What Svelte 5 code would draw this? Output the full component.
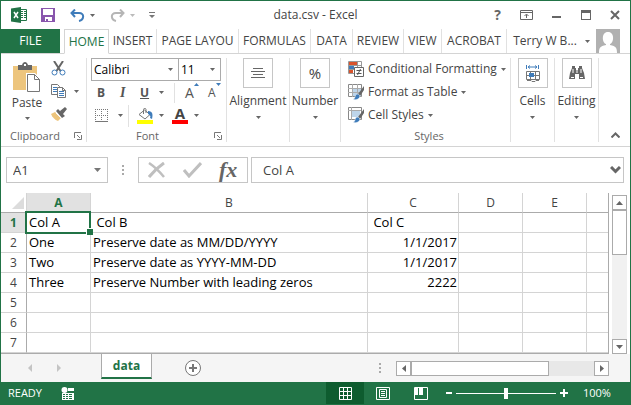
<script>
  const tabs = [
    { name: 'INSERT', w: 48 },
    { name: 'PAGE LAYOU', w: 82 },
    { name: 'FORMULAS', w: 72 },
    { name: 'DATA', w: 42 },
    { name: 'REVIEW', w: 51 },
    { name: 'VIEW', w: 38 },
    { name: 'ACROBAT', w: 65 }
  ];
  const columns = ['A', 'B', 'C', 'D', 'E', ''];
  const rows = [
    ['Col A', ' Col B', ' Col C'],
    ['One', 'Preserve date as MM/DD/YYYY', '1/1/2017'],
    ['Two', 'Preserve date as YYYY-MM-DD', '1/1/2017'],
    ['Three', 'Preserve Number with leading zeros', '2222'],
    [],
    [],
    []
  ];
  let formula = $state('Col A');
  let zoom = $state(50);
</script>

{#snippet caret()}
  <svg class="caret" width="5" height="3" viewBox="0 0 5 3" aria-hidden="true"><path d="M0 0h5L2.500 3z" fill="#666" /></svg>
{/snippet}

{#snippet launcher()}
  <svg width="8" height="8" viewBox="0 0 8 8" fill="none" stroke="#777" aria-hidden="true"><path d="M.5 6V.5H7M3 3l3 3M7.500 3v4.500H3" /></svg>
{/snippet}

<div class="window">
  <header class="title">
    <div class="quick">
      <svg width="17" height="16" viewBox="0 0 17 16" aria-label="Excel">
        <path d="M9 2.500h6.500v11H9" fill="#fff" stroke="#217346" />
        <path d="M10 4.500h2M13 4.500h2M10 6.500h2M13 6.500h2M10 8.500h2M13 8.500h2M10 10.500h2M13 10.500h2" stroke="#217346" />
        <path d="M0 1.500 10 0v16L0 14.500z" fill="#217346" />
        <path d="M3 5l4 6M7 5l-4 6" stroke="#fff" stroke-width="1.500" />
      </svg>
      <button class="bare save" aria-label="Save">
        <svg width="14" height="14" viewBox="0 0 14 14"><path d="M0 0h14v14H0z" fill="#8956ad" /><path d="M2 1h10v6H2zM4 9h7v4H7v-2H5v2H4z" fill="#fff" /></svg>
      </button>
      <button class="bare undo" aria-label="Undo">
        <svg width="15" height="13" viewBox="0 0 15 13" fill="none" stroke="#3f7cba" stroke-width="2"><path d="M5 .5 1.500 4 5 8M2 4h7c6 0 5 7 0 8" /></svg>
        {@render caret()}
      </button>
      <button class="bare redo" aria-label="Redo">
        <svg width="15" height="13" viewBox="0 0 15 13" fill="none" stroke="#b5b5b5" stroke-width="2"><path d="M10 .5 13.500 4 10 8M13 4H6c-6 0-5 7 0 8" /></svg>
        <svg width="5" height="3" viewBox="0 0 5 3"><path d="M0 0h5L2.500 3z" fill="#bbb" /></svg>
      </button>
      <button class="bare" aria-label="Customize toolbar">
        <svg width="6" height="6" viewBox="0 0 6 6"><path d="M0 0h6v1H0zM0 3h6L3 6z" fill="#777" /></svg>
      </button>
    </div>
    <h1>data.csv - Excel</h1>
    <div class="controls">
      <button class="bare help" aria-label="Help">?</button>
      <button class="bare" aria-label="Ribbon display options">
        <svg width="13" height="10" viewBox="0 0 13 10" fill="none" stroke="#666"><path d="M.5.5h12v9H.5zM1 2.500h11M6.500 8V4.500M4.500 6l2-2 2 2" /></svg>
      </button>
      <button class="bare" aria-label="Minimize"><svg width="10" height="10" viewBox="0 0 10 10"><path d="M0 6h9v2H0z" fill="#666" /></svg></button>
      <button class="bare" aria-label="Maximize"><svg width="10" height="10" viewBox="0 0 10 10"><path d="M0 0h10v10H0zM1 3v6h8V3z" fill="#666" fill-rule="evenodd" /></svg></button>
      <button class="bare" aria-label="Close"><svg width="10" height="10" viewBox="0 0 10 10"><path d="M1 1l8 8M9 1L1 9" stroke="#666" stroke-width="2" /></svg></button>
    </div>
  </header>

  <nav class="tabs">
    <button class="file">FILE</button>
    <button class="home">HOME</button>
    {#each tabs as tab}
      <button class="tab" style:width="{tab.w}px">{tab.name}</button>
    {/each}
    <button class="account">Terry W B... {@render caret()}</button>
    <svg class="avatar" width="24" height="24" viewBox="0 0 24 24" aria-label="Account picture">
      <path d="M0 0h24v24H0z" fill="#b1b1b1" />
      <path d="M12 3c7 0 6 11 2 12v1c6 1 7 3 7 8H3c0-5 1-7 7-8v-1C6 14 5 3 12 3z" fill="#fff" />
    </svg>
  </nav>

  <section class="ribbon">
    <div class="group clipboard">
      <div class="body">
        <button class="bare paste">
          <svg width="28" height="31" viewBox="0 0 28 31" aria-hidden="true">
            <path d="M0 4h24v24H0z" fill="#edc57d" />
            <path d="M5 3h4c1-4 5-4 6 0h4v5H5z" fill="#666" /><path d="M11 2h2v2h-2z" fill="#fff" />
            <path d="M13 11h9l6 6v14H13z" fill="#fff" />
            <path d="M14.500 12.500h7l5 5v12h-12zM21.500 12.500v5h5" fill="#fff" stroke="#777" />
          </svg>
          <span>Paste</span>
          {@render caret()}
        </button>
        <div class="clips">
          <button class="bare" aria-label="Cut">
            <svg width="15" height="15" viewBox="0 0 15 15" fill="none"><path d="M3 0l6.500 10M12 0L5.500 10" stroke="#666" stroke-width="2" /><circle cx="3.500" cy="11.500" r="2.500" stroke="#3f7cba" /><circle cx="11.500" cy="11.500" r="2.500" stroke="#3f7cba" /></svg>
          </button>
          <button class="bare" aria-label="Copy">
            <svg width="16" height="14" viewBox="0 0 16 14" fill="#fff" stroke="#777"><path d="M.5.5h6l2 2v8h-8z" /><path d="M2 3.500h4M2 5.500h4M2 7.500h4" stroke="#3f7cba" /><path d="M6.500 3.500h5l3 3v7h-8zM11.500 3.500v3h3" /><path d="M8 7.500h5M8 9.500h5M8 11.500h5" stroke="#3f7cba" /></svg>
            {@render caret()}
          </button>
          <button class="bare" aria-label="Format painter">
            <svg width="16" height="14" viewBox="0 0 16 14"><path d="M0 7l4-2 6 6-3 3C4 13 1 10 0 7z" fill="#edc57d" /><path d="M5 4l2-2 7 7-3 2zM9 4l5-4 2 2-4 5z" fill="#666" /><path d="M5 6l5 5" stroke="#fff" /></svg>
          </button>
        </div>
      </div>
      <footer><span>Clipboard</span>{@render launcher()}</footer>
    </div>

    <div class="group font">
      <div class="body">
        <div class="pickers">
          <label class="pick family"><select aria-label="Font"><option>Calibri</option><option>Arial</option></select>{@render caret()}</label>
          <label class="pick size"><select aria-label="Font size"><option>11</option><option>12</option></select>{@render caret()}</label>
        </div>
        <div class="styles-row">
          <button class="bare b">B</button>
          <button class="bare i">I</button>
          <button class="bare u"><span>U</span>{@render caret()}</button>
          <button class="bare grow" aria-label="Increase font size">A<svg width="5" height="3" viewBox="0 0 5 3"><path d="M0 3h5L2.500 0z" fill="#3f7cba" /></svg></button>
          <button class="bare shrink" aria-label="Decrease font size">A<svg width="5" height="3" viewBox="0 0 5 3"><path d="M0 0h5L2.500 3z" fill="#3f7cba" /></svg></button>
        </div>
        <div class="fills-row">
          <button class="bare borders" aria-label="Borders">
            <svg width="13" height="13" viewBox="0 0 13 13" fill="none" stroke="#777"><path d="M0 .5h13M0 6.500h13M.5 0v12M6.500 0v12M12.500 0v12" stroke-dasharray="1 1" /><path d="M0 12.500h13" /></svg>
            {@render caret()}
          </button>
          <button class="bare fill" aria-label="Fill color">
            <svg width="16" height="16" viewBox="0 0 16 16"><path d="M0 12h16v4H0z" fill="#ff0" /><path d="M2 6.500L7.500 2 13 6.500 8 11zM6.500 6V1.500C6.500 0 9 0 9 1.500V5" fill="#fff" stroke="#777" /><path d="M11 3c5 0 5 4 4 8l-2-1c1-2 0-3-2-4z" fill="#3f7cba" /></svg>
            {@render caret()}
          </button>
          <button class="bare color" aria-label="Font color"><span>A</span>{@render caret()}</button>
        </div>
      </div>
      <footer><span>Font</span>{@render launcher()}</footer>
    </div>

    <div class="group alignment">
      <button class="bare large">
        <span class="frame"><svg width="14" height="11" viewBox="0 0 14 11" stroke="#666"><path d="M2 .5h10M0 3.500h14M2 6.500h10M0 9.500h14" /></svg></span>
        <span>Alignment</span>{@render caret()}
      </button>
    </div>
    <div class="group number">
      <button class="bare large"><span class="frame percent">%</span><span>Number</span>{@render caret()}</button>
    </div>

    <div class="group styles">
      <div class="body">
        <button class="bare">
          <svg width="16" height="16" viewBox="0 0 16 16"><path d="M.5.5h13v12H.5zM0 4.500h13M0 8.500h13M4.500 0v13M9.500 0v13" fill="#fff" stroke="#999" /><path d="M1 1h8v3H1zM1 9h4v3H1z" fill="#d9532c" /><path d="M1 5h5v3H1z" fill="#3f7cba" /><path d="M6.500 6.500h9v9h-9z" fill="#fff" stroke="#666" /><path d="M8.500 9.500h5M8.500 12.500h5M12.500 8l-3 6" stroke="#555" /></svg>
          <span>Conditional Formatting</span>{@render caret()}
        </button>
        <button class="bare">
          <svg width="16" height="16" viewBox="0 0 16 16"><path d="M.5.5h13v12H.5z" fill="#fff" stroke="#888" /><path d="M5 4h8v8H5z" fill="#bed5ea" /><path d="M0 4.500h13M0 8.500h13M4.500 0v13M9.500 0v13" fill="none" stroke="#aaa" /><path d="M16 2l-6 8 2 2 4-6z" fill="#666" /><path d="M9 10c3 0 4 3 1 5-2 1-4 1-5 0 3 0 1-4 4-5z" fill="#3f7cba" stroke="#fff" stroke-width=".5" /></svg>
          <span>Format as Table</span>{@render caret()}
        </button>
        <button class="bare">
          <svg width="16" height="16" viewBox="0 0 16 16"><path d="M.5.5h13v12H.5z" fill="#fff" stroke="#888" /><path d="M0 3.500h13M3.500 0v13" stroke="#aaa" /><path d="M4 4h8v6H4z" fill="#bed5ea" /><path d="M16 2l-6 8 2 2 4-6z" fill="#666" /><path d="M9 10c3 0 4 3 1 5-2 1-4 1-5 0 3 0 1-4 4-5z" fill="#3f7cba" stroke="#fff" stroke-width=".5" /></svg>
          <span>Cell Styles</span>{@render caret()}
        </button>
      </div>
      <footer><span>Styles</span></footer>
    </div>

    <div class="group cells">
      <button class="bare large">
        <span class="frame"><svg width="16" height="17" viewBox="0 0 16 17" fill="none"><path d="M1.500 0v4M13.500 0v4M3 2h9M5 .5L3 2l2 1.500M10 .5L12 2l-2 1.500" stroke="#3f7cba" /><path d="M1.500 6.500h13v8h-13zM1 10.500h14M5.500 6v9M10.500 6v9M2 15.500h4l1 1h3l1-1h3" stroke="#777" /><path d="M4 8h5v4H4z" fill="#3f7cba" /></svg></span>
        <span>Cells</span>{@render caret()}
      </button>
    </div>
    <div class="group editing">
      <button class="bare large">
        <span class="frame"><svg width="16" height="14" viewBox="0 0 16 14"><path d="M3 0h3v2h1v2h2V2h1V0h3v2l2 5 1 6h-6V8H6v5H0l1-6 2-5z" fill="#666" /><path d="M4 3v4M12 3v4M2 11.500h3M11 11.500h3M8 4v3" stroke="#fff" /></svg></span>
        <span>Editing</span>{@render caret()}
      </button>
    </div>
    <button class="bare collapse" aria-label="Collapse ribbon"><svg width="9" height="6" viewBox="0 0 9 6" fill="none" stroke="#666" stroke-width="2"><path d="M.5 5.500l4-4 4 4" /></svg></button>
  </section>

  <section class="formula">
    <label class="namebox"><select aria-label="Name box"><option>A1</option></select><svg width="7" height="4" viewBox="0 0 7 4"><path d="M0 0h7L3.500 4z" fill="#777" /></svg></label>
    <svg class="grip" width="2" height="10" viewBox="0 0 2 10"><path d="M0 0h2v2H0zM0 4h2v2H0zM0 8h2v2H0z" fill="#aaa" /></svg>
    <div class="actions">
      <button class="bare" aria-label="Cancel"><svg width="18" height="16" viewBox="0 0 18 16" stroke="#bfbfbf" fill="none"><path d="M1 1c6 4 10 8 15 14" stroke-width="2.500" /><path d="M16 1C10 5 5 10 1 15" stroke-width="3" /></svg></button>
      <button class="bare" aria-label="Enter"><svg width="19" height="16" viewBox="0 0 19 16"><path d="M1 8l5 6L18 1" fill="none" stroke="#bfbfbf" stroke-width="3" /></svg></button>
      <button class="bare fx" aria-label="Insert function">fx</button>
    </div>
    <div class="entry">
      <input aria-label="Formula" bind:value={formula} />
      <button class="bare" aria-label="Expand formula bar"><svg width="11" height="8" viewBox="0 0 11 8" fill="none" stroke="#666" stroke-width="3"><path d="M1 1l4.500 4.500L10 1" /></svg></button>
    </div>
  </section>

  <main>
    <div class="sheet">
      <table>
        <colgroup><col class="cn" /><col class="ca" /><col class="cb" /><col class="cc" /><col class="cd" /><col class="cd" /><col /></colgroup>
        <thead>
          <tr>
            <th class="corner"><svg width="12" height="12" viewBox="0 0 12 12"><path d="M12 0v12H0z" fill="#dcdcdc" /></svg></th>
            {#each columns as c}<th class:on={c === 'A'}>{c}</th>{/each}
          </tr>
        </thead>
        <tbody>
          {#each rows as row, r}
            <tr>
              <th class:on={r === 0}>{r + 1}</th>
              {#each columns as _, c}
                <td class:active={r === 0 && c === 0} class:num={r > 0 && c === 2}>{row[c] ?? ''}</td>
              {/each}
            </tr>
          {/each}
        </tbody>
      </table>
    </div>
    <div class="vscroll">
      <button aria-label="Scroll up"><svg width="7" height="4" viewBox="0 0 7 4"><path d="M0 4h7L3.500 0z" fill="#666" /></svg></button>
      <div class="thumb"></div>
      <div class="track"></div>
      <button aria-label="Scroll down"><svg width="7" height="4" viewBox="0 0 7 4"><path d="M0 0h7L3.500 4z" fill="#666" /></svg></button>
    </div>
  </main>

  <div class="sheets">
    <button class="bare prev" aria-label="Previous sheet"><svg width="4" height="8" viewBox="0 0 4 8"><path d="M4 0v8L0 4z" fill="#c4c4c4" /></svg></button>
    <button class="bare next" aria-label="Next sheet"><svg width="4" height="8" viewBox="0 0 4 8"><path d="M0 0v8l4-4z" fill="#c4c4c4" /></svg></button>
    <button class="current">data</button>
    <button class="bare add" aria-label="New sheet"><svg width="16" height="16" viewBox="0 0 16 16" fill="none" stroke="#777"><circle cx="8" cy="8" r="7.500" fill="#fff" /><path d="M8 4v8M4 8h8" stroke-width="2" /></svg></button>
    <svg class="grip" width="2" height="10" viewBox="0 0 2 10"><path d="M0 0h2v2H0zM0 4h2v2H0zM0 8h2v2H0z" fill="#aaa" /></svg>
    <div class="hscroll">
      <button aria-label="Scroll left"><svg width="4" height="7" viewBox="0 0 4 7"><path d="M4 0v7L0 3.500z" fill="#666" /></svg></button>
      <div class="thumb"></div>
      <div class="track"></div>
      <button aria-label="Scroll right"><svg width="4" height="7" viewBox="0 0 4 7"><path d="M0 0v7l4-3.500z" fill="#666" /></svg></button>
    </div>
  </div>

  <footer class="status">
    <span class="ready">READY</span>
    <button class="bare macro" aria-label="Record macro"><svg width="13" height="13" viewBox="0 0 13 13"><path d="M7 1h6v3H7zM1 6h12v7H1z" fill="#fff" /><circle cx="3.500" cy="3" r="3" fill="#fff" /><path d="M2 7.500h2M5 7.500h2M8 7.500h3M2 9.500h2M5 9.500h2M8 9.500h3M2 11.500h2M5 11.500h2M8 11.500h3" stroke="#217346" /></svg></button>
    <button class="bare view chosen" aria-label="Normal view"><svg width="13" height="13" viewBox="0 0 13 13" fill="none" stroke="#fff"><path d="M.5.5h12v12H.5zM0 4.500h13M0 8.500h13M4.500 0v13M8.500 0v13" /></svg></button>
    <button class="bare view" aria-label="Page layout view"><svg width="14" height="13" viewBox="0 0 14 13" fill="none" stroke="#fff"><path d="M.5.5h13v12H.5zM3.500 2.500h7v8h-7zM5 4.500h4M5 6.500h4M5 8.500h4" /></svg></button>
    <button class="bare view" aria-label="Page break view"><svg width="14" height="13" viewBox="0 0 14 13"><path d="M.5.5h13v12H.5z" fill="none" stroke="#fff" /><path d="M1 1h3v7H1zM5 1h4v7H5z" fill="#fff" /></svg></button>
    <button class="bare minus" aria-label="Zoom out"><svg width="6" height="2" viewBox="0 0 6 2"><path d="M0 0h6v2H0z" fill="#fff" /></svg></button>
    <input type="range" aria-label="Zoom" bind:value={zoom} />
    <button class="bare plus" aria-label="Zoom in"><svg width="8" height="8" viewBox="0 0 8 8"><path d="M3 0h2v3h3v2H5v3H3V5H0V3h3z" fill="#fff" /></svg></button>
    <span class="pct">100%</span>
  </footer>
</div>

<style>
  :global(body) { margin: 0; }
  .window {
    box-sizing: border-box; min-height: 100vh; display: flex; flex-direction: column;
    border: 1px solid #217346; background: #fff; color: #444;
    font: 12px/16px "Open Sans", "Noto Sans", sans-serif; overflow: hidden;
  }
  .window :global(*) { box-sizing: border-box; }
  svg { display: block; flex: none; }
  button, select, input { font: inherit; color: inherit; margin: 0; padding: 0; border: 0; border-radius: 0; background: none; }
  button { white-space: nowrap; }
  .bare { display: flex; align-items: center; }

  .title { display: grid; grid-template-columns: 1fr auto 1fr; align-items: center; height: 28px; }
  .quick { display: flex; align-items: center; padding-left: 10px; }
  .quick .save { margin-left: 13px; }
  .quick .undo { margin-left: 15px; gap: 5px; }
  .quick .redo { margin: 0 14px 0 15px; gap: 5px; }
  h1 { margin: 0; font-size: 12px; line-height: 16px; font-weight: 400; }
  .controls { display: flex; align-items: center; justify-content: flex-end; gap: 19px; padding-right: 10px; }
  .help { font-weight: 700; font-size: 14px; color: #666; }

  .tabs { display: flex; height: 25px; border-bottom: 1px solid #d4d4d4; }
  .tabs button { display: flex; align-items: center; justify-content: center; flex: none; }
  .file { width: 59px; background: #217346; color: #fff; }
  .tabs .home { width: 45px; height: 25px; margin-left: 4px; border: 1px solid #d4d4d4; border-bottom-color: #fff; background: #fff; color: #217346; }
  .tab { height: 24px; border-right: 1px solid #e1e1e1; }
  .tabs .account { flex: 1; gap: 8px; }
  .avatar { margin-right: 10px; }

  .ribbon { display: flex; height: 93px; border-bottom: 1px solid #d4d4d4; padding: 4px 0; }
  .group { display: flex; flex-direction: column; flex: none; border-right: 1px solid #e1e1e1; }
  .group .body { flex: 1; }
  .group footer { display: flex; align-items: center; justify-content: space-between; height: 12px; padding: 0 4px 0 9px; color: #666; font-size: 11px; }
  .clipboard { width: 86px; }
  .clipboard .body { display: flex; }
  .paste { flex-direction: column; width: 48px; margin-left: 2px; padding-top: 4px; gap: 2px; height: 68px; }
  .paste .caret { margin-top: 4px; }
  .paste span { line-height: 16px; }
  .clips { display: flex; flex-direction: column; padding-top: 2px; gap: 7px; }
  .clips button { gap: 7px; height: 16px; }

  .font { width: 140px; padding-left: 4px; }
  .font footer { padding-left: 45px; }
  .pickers { display: flex; }
  .pick, .namebox { display: grid; align-items: center; border: 1px solid #ababab; }
  .pick select, .namebox select { grid-area: 1 / 1; width: 100%; appearance: none; }
  .pick svg, .namebox svg { grid-area: 1 / 1; justify-self: end; pointer-events: none; }
  .pick { height: 23px; color: #000; }
  .pick select { padding-left: 2px; }
  .pick svg { margin-right: 5px; }
  .family { width: 88px; }
  .size { width: 43px; margin-left: -1px; }
  .styles-row, .fills-row { display: flex; align-items: center; height: 23px; }
  .styles-row { color: #555; }
  .b { width: 23px; padding-left: 6px; font-weight: 700; }
  .i { width: 23px; padding-left: 6px; font: italic 700 14px/16px "Liberation Serif", serif; }
  .u { width: 37px; gap: 10px; font-weight: 700; }
  .u span { text-decoration: underline; padding-left: 3px; }
  .grow, .shrink { align-items: flex-start; line-height: 20px; }
  .grow { font-size: 14px; border-left: 1px solid #e1e1e1; padding-left: 10px; width: 34px; }
  .borders { width: 38px; padding-left: 4px; gap: 10px; border-right: 1px solid #e1e1e1; height: 22px; }
  .fill { gap: 6px; padding-left: 8px; }
  .color { gap: 6px; padding-left: 8px; }
  .color span { width: 16px; border-bottom: 4px solid red; font-size: 15px; line-height: 13px; font-weight: 700; }

  .large { flex-direction: column; width: 100%; }
  .frame { display: flex; align-items: center; justify-content: center; width: 30px; height: 30px; margin-bottom: 5px; border: 1px solid #c6c6c6; }
  .large .caret { margin-top: 7px; }
  .percent { font-size: 15px; }
  .alignment { width: 63px; }
  .number { width: 51px; }
  .styles { width: 170px; padding-left: 7px; }
  .styles .body { display: flex; flex-direction: column; padding-top: 3px; gap: 7px; }
  .styles .body button { gap: 4px; height: 16px; }
  .styles footer { justify-content: center; padding: 0; }
  .cells, .editing { width: 44px; }
  .collapse { margin-left: auto; align-self: flex-end; padding: 0 10px 4px 0; }

  .formula { display: flex; align-items: center; height: 46px; padding: 0 6px 0 5px; }
  .namebox { width: 102px; height: 26px; border-color: #c6c6c6; font-size: 13px; }
  .namebox select { padding-left: 6px; }
  .namebox svg { margin-right: 6px; }
  .formula .grip { margin: 0 14px; }
  .actions { display: flex; align-items: center; width: 110px; height: 26px; border: 1px solid #c6c6c6; gap: 17px; padding-left: 9px; }
  .fx { font: italic 700 22px/22px "Liberation Serif", serif; color: #666; }
  .entry { flex: 1; display: flex; align-items: center; height: 26px; margin-left: 3px; border: 1px solid #c6c6c6; padding: 0 2px 0 11px; }
  .entry input { flex: 1; min-width: 0; font-size: 13px; outline: 0; }

  main { display: flex; flex: 1; }
  .sheet { flex: 1; border-right: 1px solid #ababab; border-bottom: 1px solid #ababab; }
  table { width: 100%; table-layout: fixed; border-collapse: separate; border-spacing: 0; color: #000; font-size: 13px; line-height: 19px; }
  .cn { width: 26px; } .ca { width: 64px; } .cb { width: 277px; } .cc { width: 91px; } .cd { width: 64px; }
  th, td { height: 20px; padding: 0 2px; border-right: 1px solid #d4d4d4; border-bottom: 1px solid #d4d4d4; white-space: pre; overflow: hidden; text-align: left; }
  tr > :last-child { border-right: 0; }
  th { font-size: 12px; font-weight: 400; color: #444; text-align: center; }
  thead th { border-bottom-color: #ababab; }
  tbody th { border-right-color: #ababab; }
  .corner svg { margin-left: 9px; }
  th.on { background: #e1e1e1; color: #217346; font-weight: 700; }
  td.num { text-align: right; padding-right: 1px; }
  td.active { position: relative; overflow: visible; }
  td.active::before { content: ""; position: absolute; inset: -2px -1px -2px -2px; border: 2px solid #217346; }
  td.active::after { content: ""; position: absolute; right: -3px; bottom: -3px; width: 6px; height: 6px; background: #217346; border: 1px solid #fff; border-width: 1px 0 0 1px; }

  .vscroll { display: flex; flex-direction: column; width: 15px; margin: 2px 3px 0; }
  .vscroll button, .hscroll button { display: grid; place-items: center; width: 15px; height: 15px; border: 1px solid #ababab; background: #fff; flex: none; }
  .thumb { border: 1px solid #ababab; background: #fff; }
  .track { flex: 1; background: #f1f1f1; }
  .vscroll .thumb { height: 45px; }

  .sheets { display: flex; align-items: center; height: 28px; background: #f5f5f5; padding-right: 21px; }
  .prev { margin-left: 27px; }
  .next { margin-left: 25px; }
  .current { align-self: flex-start; width: 51px; height: 25px; margin-left: 40px; border: 1px solid #ababab; border-width: 0 1px 2px; border-bottom-color: #217346; background: #fff; color: #217346; font-weight: 700; }
  .add { margin-left: 33px; }
  .sheets .grip { margin-left: auto; }
  .hscroll { display: flex; width: 35%; margin-left: 15px; height: 15px; }
  .hscroll .thumb { flex: 3; }
  .hscroll .track { flex: 1; background: #e8e8e8; }

  .status { display: flex; align-items: center; height: 22px; background: #217346; color: #fff; font-size: 11px; }
  .ready { width: 60px; padding-left: 7px; }
  .view { justify-content: center; width: 38px; height: 22px; }
  .chosen { margin-left: auto; background: #0e5c2f; }
  .minus { margin-left: 6px; }
  .status input { width: 100px; height: 12px; margin: 0 4px; appearance: none; background: linear-gradient(#fff, #fff) center / 100% 1px no-repeat; }
  .status input::-webkit-slider-thumb { appearance: none; width: 4px; height: 11px; background: #fff; }
  .pct { width: 47px; padding-left: 0; margin-left: 15px; }
</style>
